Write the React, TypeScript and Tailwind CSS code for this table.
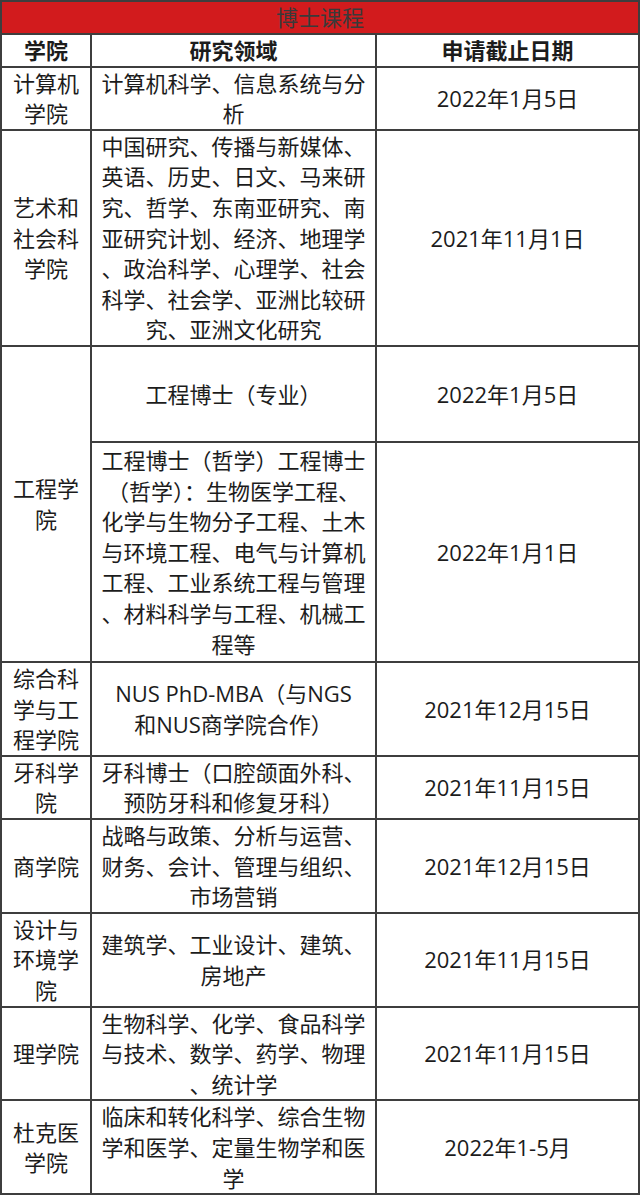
import React from 'react'

interface ProgramRow {
  school: string
  fields: React.ReactNode
  deadline: string
}

const rows: ProgramRow[] = [
  { school: '计算机学院', fields: '计算机科学、信息系统与分析', deadline: '2022年1月5日' },
  {
    school: '艺术和社会科学院',
    fields:
      '中国研究、传播与新媒体、英语、历史、日文、马来研究、哲学、东南亚研究、南亚研究计划、经济、地理学、政治科学、心理学、社会科学、社会学、亚洲比较研究、亚洲文化研究',
    deadline: '2021年11月1日',
  },
]

const rowsAfter: ProgramRow[] = [
  {
    school: '综合科学与工程学院',
    fields: (
      <>
        NUS PhD-MBA（与NGS
        <br />
        和NUS商学院合作）
      </>
    ),
    deadline: '2021年12月15日',
  },
  { school: '牙科学院', fields: '牙科博士（口腔颌面外科、预防牙科和修复牙科）', deadline: '2021年11月15日' },
  {
    school: '商学院',
    fields: '战略与政策、分析与运营、财务、会计、管理与组织、市场营销',
    deadline: '2021年12月15日',
  },
  { school: '设计与环境学院', fields: '建筑学、工业设计、建筑、房地产', deadline: '2021年11月15日' },
  {
    school: '理学院',
    fields: '生物科学、化学、食品科学与技术、数学、药学、物理、统计学',
    deadline: '2021年11月15日',
  },
  {
    school: '杜克医学院',
    fields: '临床和转化科学、综合生物学和医学、定量生物学和医学',
    deadline: '2022年1-5月',
  },
]

// shared cell look
const td =
  'border-2 border-[#3e3e3e] px-1.5 py-0 text-center align-middle [line-break:anywhere]'

const Row: React.FC<{ row: ProgramRow }> = ({ row }) => (
  <tr>
    <td className={td}>{row.school}</td>
    <td className={td}>{row.fields}</td>
    <td className={td}>{row.deadline}</td>
  </tr>
)

export default function App() {
  return (
    <div className="w-[640px] bg-white text-[#1c1c1c] text-[22px] leading-[30.6px] [font-family:'Open_Sans','Noto_Sans_CJK_SC',sans-serif]">
      <table className="w-full table-fixed border-collapse">
        <colgroup>
          <col className="w-[90px]" />
          <col className="w-[285px]" />
          <col />
        </colgroup>
        <thead>
          <tr>
            <th
              colSpan={3}
              className="h-[33px] border-2 border-[#3e3e3e] bg-[#d21b1d] p-0 text-center font-normal text-[#3a3a3a]"
            >
              博士课程
            </th>
          </tr>
          <tr>
            <th className="h-[32px] border-2 border-[#3e3e3e] p-0 text-center font-bold">学院</th>
            <th className="h-[32px] border-2 border-[#3e3e3e] p-0 text-center font-bold">研究领域</th>
            <th className="h-[32px] border-2 border-[#3e3e3e] p-0 text-center font-bold">申请截止日期</th>
          </tr>
        </thead>
        <tbody>
          {rows.map((row) => (
            <Row key={row.school} row={row} />
          ))}

          {/* Engineering spans two programme rows */}
          <tr>
            <td rowSpan={2} className={td}>
              工程学院
            </td>
            <td className={`${td} h-[96px]`}>工程博士（专业）</td>
            <td className={`${td} h-[96px]`}>2022年1月5日</td>
          </tr>
          <tr>
            <td className={`${td} py-[2px]`}>
              工程博士（哲学）工程博士（哲学）：生物医学工程、化学与生物分子工程、土木与环境工程、电气与计算机工程、工业系统工程与管理、材料科学与工程、机械工程等
            </td>
            <td className={td}>2022年1月1日</td>
          </tr>

          {rowsAfter.map((row) => (
            <Row key={row.school} row={row} />
          ))}
        </tbody>
      </table>
    </div>
  )
}
